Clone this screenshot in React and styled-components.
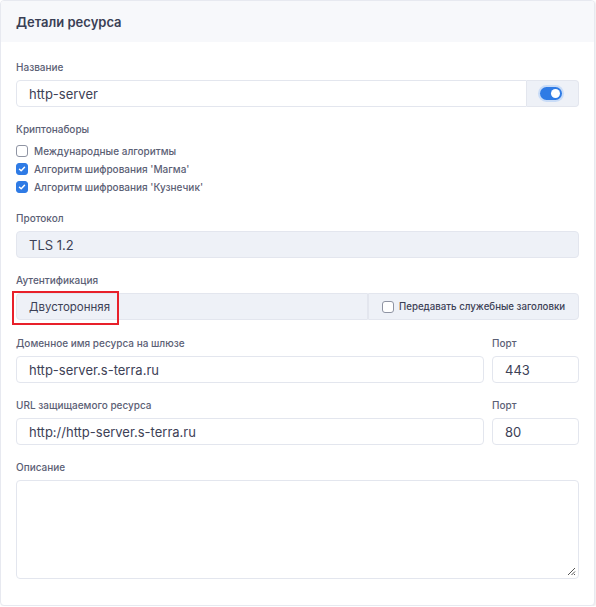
import React from 'react'
import styled, { createGlobalStyle } from 'styled-components'

const Global = createGlobalStyle`
  body {
    margin: 0;
    background: #ffffff;
    font-family: Inter, "Noto Sans", sans-serif;
  }
`

const Card = styled.div`
  width: 593px;
  height: 604px;
  border: 1px solid #e7e9f0;
  border-radius: 4px;
  background: #fff;
  box-shadow: 1px 1px 2px rgba(0, 0, 0, 0.08);
  overflow: hidden;
`

const Header = styled.div`
  height: 41px;
  background: #f7f8fb;
  display: flex;
  align-items: center;
  padding: 0 15px;
  font-size: 13px;
  font-weight: 600;
  color: #3a3f55;
`

const Body = styled.div`
  padding: 18px 15px 0;
  display: flex;
  flex-direction: column;
  gap: 15px;
`

const Field = styled.div`
  display: flex;
  flex-direction: column;
  min-width: 0;
  flex: ${p => p.$grow ? '1' : 'none'};
  width: ${p => p.$width || 'auto'};
  margin-bottom: ${p => p.$after || 0}px;
`

const Label = styled.div`
  font-size: 10px;
  font-weight: 500;
  line-height: 14px;
  color: #5b6075;
  margin-bottom: ${p => p.$gap || 6}px;
`

const Input = styled.div`
  height: 27px;
  box-sizing: border-box;
  border: 1px solid #e3e6ee;
  border-radius: ${p => p.$radius || '4px'};
  background: ${p => p.$muted ? '#eef1f7' : '#fff'};
  display: flex;
  align-items: center;
  padding-left: 12px;
  font-size: ${p => p.$size || 13}px;
  color: #3d4156;
  flex: ${p => p.$fill ? '1' : 'none'};
  position: relative;
`

const Group = styled.div`
  display: flex;
`

const Addon = styled.div`
  width: 52px;
  height: 27px;
  box-sizing: border-box;
  border: 1px solid #e3e6ee;
  border-left: none;
  border-radius: 0 4px 4px 0;
  background: #eef1f7;
  display: flex;
  align-items: center;
  padding-left: 13px;
`

const Toggle = styled.span`
  width: 22px;
  height: 13px;
  border-radius: 7px;
  background: #2f7be5;
  box-shadow: 0 0 0 2px #c9dcf7;
  position: relative;
  &::after {
    content: '';
    position: absolute;
    right: 2px;
    top: 2px;
    width: 9px;
    height: 9px;
    border-radius: 50%;
    background: #fff;
  }
`

const CheckRow = styled.label`
  display: flex;
  align-items: center;
  gap: 6px;
  height: 18px;
  font-size: 10px;
  font-weight: 500;
  color: #5b6075;
`

const Box = styled.span`
  width: 12px;
  height: 12px;
  box-sizing: border-box;
  border-radius: 3px;
  border: 1px solid ${p => p.$on ? '#2f7be5' : '#8f94a3'};
  background: ${p => p.$on ? '#2f7be5' : '#fff'};
  display: flex;
  align-items: center;
  justify-content: center;
  flex: none;
`

const SideBox = styled.div`
  width: 211px;
  height: 27px;
  box-sizing: border-box;
  border: 1px solid #e3e6ee;
  border-radius: 0 4px 4px 0;
  background: #eef1f7;
  display: flex;
  align-items: center;
  gap: 5px;
  padding-left: 13px;
  font-size: 9.7px;
  font-weight: 500;
  color: #3d4156;
  white-space: nowrap;
  flex: none;
`

const Marker = styled.div`
  position: absolute;
  left: -5px;
  top: -3px;
  width: 107px;
  height: 34px;
  box-sizing: border-box;
  border: 2px solid #e8202a;
`

const Row = styled.div`
  display: flex;
  gap: 8px;
`

const TextArea = styled.div`
  height: 99px;
  box-sizing: border-box;
  border: 1px solid #e3e6ee;
  border-radius: 4px;
  position: relative;
`

const Grip = styled.svg`
  position: absolute;
  right: 2px;
  bottom: 2px;
`

const Check = ({ on }) => (
  <Box $on={on}>
    {on && (
      <svg width="8" height="8" viewBox="0 0 8 8">
        <path d="M1.5 4.2 L3.2 5.8 L6.5 2.3" fill="none" stroke="#fff" strokeWidth="1.5" strokeLinecap="round" strokeLinejoin="round" />
      </svg>
    )}
  </Box>
)

export default function App() {
  return (
    <>
      <Global />
      <Card>
        <Header>Детали ресурса</Header>
        <Body>
          <Field>
            <Label>Название</Label>
            <Group>
              <Input $fill $radius="4px 0 0 4px">http-server</Input>
              <Addon><Toggle /></Addon>
            </Group>
          </Field>

          <Field>
            <Label $gap={6}>Криптонаборы</Label>
            <CheckRow><Check />Международные алгоритмы</CheckRow>
            <CheckRow><Check on />Алгоритм шифрования 'Магма'</CheckRow>
            <CheckRow><Check on />Алгоритм шифрования 'Кузнечик'</CheckRow>
          </Field>

          <Field>
            <Label>Протокол</Label>
            <Input $muted>TLS 1.2</Input>
          </Field>

          <Field $after={1}>
            <Label>Аутентификация</Label>
            <Group>
              <Input $fill $muted $size={11.5} $radius="4px 0 0 4px">
                Двусторонняя
                <Marker />
              </Input>
              <SideBox><Check />Передавать служебные заголовки</SideBox>
            </Group>
          </Field>

          <Row>
            <Field $grow>
              <Label>Доменное имя ресурса на шлюзе</Label>
              <Input>http-server.s-terra.ru</Input>
            </Field>
            <Field $width="87px">
              <Label>Порт</Label>
              <Input>443</Input>
            </Field>
          </Row>

          <Row>
            <Field $grow>
              <Label>URL защищаемого ресурса</Label>
              <Input>http://http-server.s-terra.ru</Input>
            </Field>
            <Field $width="87px">
              <Label>Порт</Label>
              <Input>80</Input>
            </Field>
          </Row>

          <Field>
            <Label>Описание</Label>
            <TextArea>
              <Grip width="9" height="9" viewBox="0 0 9 9">
                <path d="M8 1 L1 8 M8 4.5 L4.5 8 M8 7 L7 8" stroke="#555" strokeWidth="1" />
              </Grip>
            </TextArea>
          </Field>
        </Body>
      </Card>
    </>
  )
}
